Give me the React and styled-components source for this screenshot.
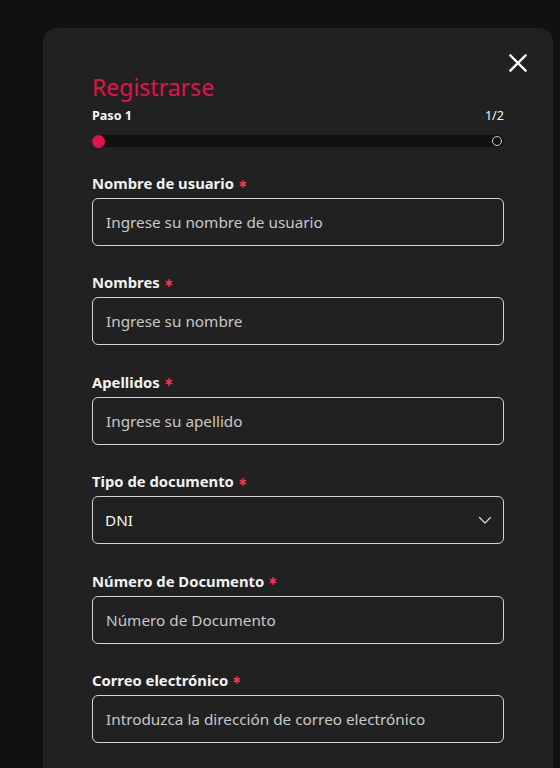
import React, { useState } from 'react';
import styled, { createGlobalStyle } from 'styled-components';

const GlobalStyle = createGlobalStyle`
  html, body {
    margin: 0;
    padding: 0;
    background: #111111;
    font-family: "Noto Sans", "Open Sans", sans-serif;
    color: #f2f2f2;
  }
  * { box-sizing: border-box; }
`;

const Page = styled.div`
  min-height: 768px;
  padding: 28px 7px 0 43px;
  overflow: hidden;
`;

const Card = styled.div`
  position: relative;
  background: #212121;
  border-radius: 14px 14px 0 0;
  padding: 44px 49px 40px;
  min-height: 760px;
`;

const CloseButton = styled.button`
  position: absolute;
  top: 22px;
  right: 22px;
  width: 26px;
  height: 26px;
  padding: 0;
  border: none;
  background: transparent;
  display: flex;
  align-items: center;
  justify-content: center;
  cursor: pointer;
`;

const Title = styled.h1`
  margin: 0 0 6px;
  font-size: 23px;
  font-weight: 400;
  line-height: 30px;
  color: #e2124c;
`;

const StepRow = styled.div`
  display: flex;
  justify-content: space-between;
  font-size: 12.6px;
  line-height: 16px;
  margin-top: 1px;
  color: #f5f5f5;
`;

const StepLabel = styled.span`
  font-weight: ${({ bold }) => (bold ? 700 : 400)};
`;

const Track = styled.div`
  margin-top: 11px;
  height: 12px;
  border-radius: 6px;
  background: #111111;
  display: flex;
  align-items: center;
  justify-content: space-between;
  margin-bottom: 26px;
`;

const Dot = styled.span`
  width: ${({ done }) => (done ? 13 : 10)}px;
  height: ${({ done }) => (done ? 13 : 10)}px;
  border-radius: 50%;
  background: ${({ done }) => (done ? '#e2124c' : 'transparent')};
  border: ${({ done }) => (done ? 'none' : '1.5px solid #d0d0d0')};
  margin-right: ${({ done }) => (done ? 0 : 2)}px;
`;

const Field = styled.div`
  display: flex;
  flex-direction: column;
  gap: 5px;
  margin-bottom: 26.4px;
`;

const Label = styled.label`
  font-size: 14.8px;
  line-height: 20px;
  font-weight: 700;
  color: #f2f2f2;
  display: flex;
  align-items: center;
  gap: 5px;
`;

const Required = styled.svg`
  width: 8px;
  height: 8px;
  flex: none;
  margin-top: 1px;
`;

const Input = styled.input`
  height: 48px;
  width: 100%;
  border: 1px solid #d4d4d4;
  border-radius: 6px;
  background: transparent;
  padding: 0 13px;
  font-family: inherit;
  font-size: 15.3px;
  color: #f2f2f2;
  outline: none;

  &::placeholder {
    color: #c8c8c8;
  }
`;

const SelectBox = styled.div`
  height: 48px;
  border: 1px solid #d4d4d4;
  border-radius: 6px;
  display: flex;
  align-items: center;
  justify-content: space-between;
  padding: 0 11px 0 12px;
  font-size: 15.3px;
  color: #f5f5f5;
`;

const Asterisk = () => (
  <Required viewBox="0 0 8 8" aria-hidden="true">
    <path d="M4 0.3 V7.7 M0.8 2.1 L7.2 5.9 M7.2 2.1 L0.8 5.9" stroke="#ff3356" strokeWidth="1.6" />
  </Required>
);

const Chevron = () => (
  <svg width="14" height="14" viewBox="0 0 14 14" fill="none">
    <path d="M1.5 4.5 L7 10 L12.5 4.5" stroke="#d8d8d8" strokeWidth="1.2" strokeLinecap="round" strokeLinejoin="round" />
  </svg>
);

const CloseIcon = () => (
  <svg width="18" height="18" viewBox="0 0 18 18" fill="none">
    <path d="M1.5 1.5 L16.5 16.5 M16.5 1.5 L1.5 16.5" stroke="#ffffff" strokeWidth="2.4" strokeLinecap="square" />
  </svg>
);

const fields = [
  { id: 'username', label: 'Nombre de usuario', placeholder: 'Ingrese su nombre de usuario' },
  { id: 'names', label: 'Nombres', placeholder: 'Ingrese su nombre' },
  { id: 'lastnames', label: 'Apellidos', placeholder: 'Ingrese su apellido' },
  { id: 'doctype', label: 'Tipo de documento', select: true },
  { id: 'docnumber', label: 'Número de Documento', placeholder: 'Número de Documento' },
  { id: 'email', label: 'Correo electrónico', placeholder: 'Introduzca la dirección de correo electrónico' },
];

const App = () => {
  const [values, setValues] = useState({ doctype: 'DNI' });

  return (
    <>
      <GlobalStyle />
      <Page>
        <Card>
          <CloseButton aria-label="Cerrar">
            <CloseIcon />
          </CloseButton>
          <Title>Registrarse</Title>
          <StepRow>
            <StepLabel bold>Paso 1</StepLabel>
            <StepLabel>1/2</StepLabel>
          </StepRow>
          <Track>
            <Dot done />
            <Dot />
          </Track>

          {fields.map((f) => (
            <Field key={f.id}>
              <Label htmlFor={f.id}>
                {f.label}
                <Asterisk />
              </Label>
              {f.select ? (
                <SelectBox id={f.id}>
                  {values.doctype}
                  <Chevron />
                </SelectBox>
              ) : (
                <Input
                  id={f.id}
                  placeholder={f.placeholder}
                  value={values[f.id] || ''}
                  onChange={(e) => setValues((prev) => ({ ...prev, [f.id]: e.target.value }))}
                />
              )}
            </Field>
          ))}
        </Card>
      </Page>
    </>
  );
};

export default App;
